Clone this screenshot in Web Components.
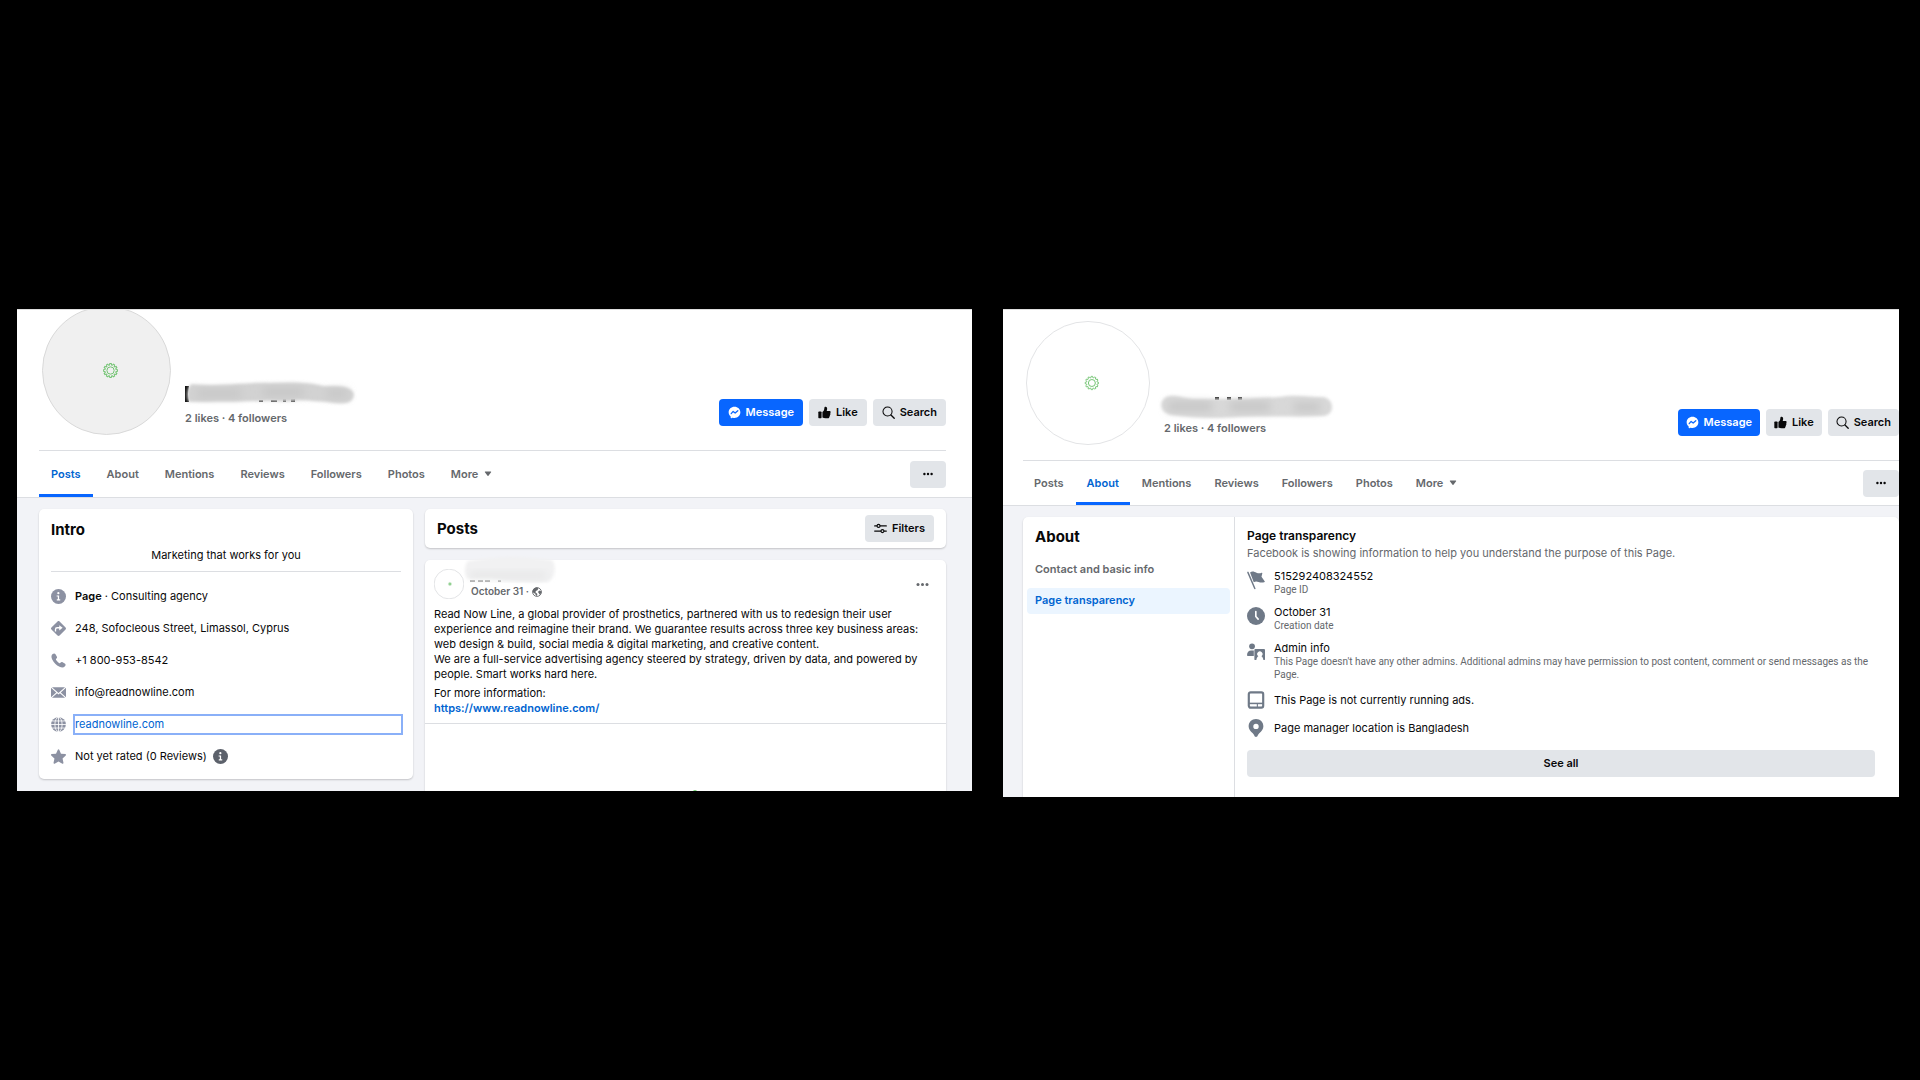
<!DOCTYPE html>
<html lang="en">
<head>
<meta charset="utf-8">
<meta name="viewport" content="width=device-width, initial-scale=1">
<title>Page profile</title>
<style>
  :root {
    --blue: #0866ff;
    --link: #0064d1;
    --text: #080809;
    --muted: #65686c;
    --line: #dcdee2;
    --wash: #f2f3f7;
    --button: #e2e5e9;
    --icon: #8c91a2;
    --card-shadow: 0 1px 2px rgba(0, 0, 0, 0.2);
    --small-font: Roboto, "Liberation Sans", sans-serif;
  }
  body {
    margin: 0;
    min-height: 100vh;
    background: #000;
    color: var(--text);
    font: 11px/15px Inter, "Liberation Sans", sans-serif;
  }
  main {
    display: grid;
    grid-template-columns: 955fr 896fr;
    gap: 31px;
    align-items: start;
    padding: 309px 21px 0 17px;
  }
  .posts-page {
    --pad-left: 22px;
    --pad-right: 26px;
    --avatar: 129px;
    --avatar-top: -4px;
    --name-gap: 6px;
    --button-pad: 9px;
    --tab-pad: 12px;
    --tab-gap: 2px;
    --tab-height: 46px;
  }
  .about-page {
    --pad-left: 20px;
    --pad-right: 0px;
    --avatar: 124px;
    --avatar-top: 11px;
    --name-gap: 2px;
    --button-pad: 8px;
    --tab-pad: 11px;
    --tab-gap: 1px;
    --tab-height: 44px;
  }
</style>
</head>
<body>
<main>
  <page-panel class="posts-page">
    <profile-header slot="header" avatar="grey" active="Posts"></profile-header>
    <posts-view></posts-view>
  </page-panel>
  <page-panel class="about-page">
    <profile-header slot="header" avatar="white" active="About"></profile-header>
    <about-view></about-view>
  </page-panel>
</main>

<script>
(() => {
  // Gear outline used by the avatars, about 14 units wide around 0,0
  const teeth = Array.from({ length: 12 }, (_, i) => {
    const at = (r, a) => {
      const t = (i * 30 + a) * Math.PI / 180;
      return `${(r * Math.cos(t)).toFixed(2)} ${(r * Math.sin(t)).toFixed(2)}`;
    };
    return `${at(5.5, -11)}L${at(6.9, -6)}L${at(6.9, 6)}L${at(5.5, 11)}`;
  }).join('L');
  const GEAR = `<g fill="none" stroke="#74c474" stroke-width="1"><path d="M${teeth}Z"/><circle r="3.6"/></g>`;

  const ICONS = {
    messenger: '<path fill="currentColor" d="M10 1C4.9 1 1 4.7 1 9.6c0 2.6 1.1 4.8 2.8 6.3.2.1.3.4.3.6v1.6c0 .6.6.9 1.1.7l1.8-.8c.2-.1.3-.1.5 0 .8.2 1.6.3 2.5.3 5.1 0 9-3.7 9-8.7S15.1 1 10 1z"/><path fill="none" stroke="#0866ff" stroke-width="1.9" stroke-linecap="round" stroke-linejoin="round" d="M4.9 11.8 7.9 8.3 11 10.8 15.1 7.2"/>',
    like: '<path fill="currentColor" d="M1.5 8.500h3c.6 0 1 .4 1 1v8.200c0 .6-.4 1-1 1h-3c-.6 0-1-.4-1-1V9.500c0-.6.4-1 1-1z"/><path fill="currentColor" d="M6.800 9.300c2-1.300 2.900-3.300 3-6.200 0-1.300.8-2.100 1.900-2.100 1.500 0 2.400 1.300 2.400 3.200 0 1.200-.3 2.300-.7 3.300h4.100c1.200 0 2 .8 2 1.800 0 .8-.4 1.300-.9 1.600.4.4.6.9.6 1.400 0 .8-.5 1.400-1.100 1.700.2.3.3.7.3 1 0 .8-.5 1.400-1.200 1.600.1.2.1.4.1.6 0 .9-.8 1.600-1.900 1.600h-3.700c-2 0-3.400-.3-4.900-1.200z"/>',
    search: '<circle cx="8.500" cy="8.500" r="7" fill="none" stroke="currentColor" stroke-width="1.600"/><path stroke="currentColor" stroke-width="2" stroke-linecap="round" d="m13.800 13.800 5 5"/>',
    dots: '<circle cx="4" cy="10" r="2" fill="currentColor"/><circle cx="10" cy="10" r="2" fill="currentColor"/><circle cx="16" cy="10" r="2" fill="currentColor"/>',
    filters: '<g fill="none" stroke="currentColor" stroke-width="1.700" stroke-linecap="round"><path d="M1 6h3.500M9.500 6H19M1 14h9.500M15.500 14H19"/><circle cx="7" cy="6" r="2.300"/><circle cx="13" cy="14" r="2.300"/></g>',
    caret: '<path fill="currentColor" d="M3 4h14c1 0 1.400 1 .8 1.700l-6.700 8.600c-.6.700-1.600.7-2.200 0L2.200 5.700C1.600 5 2 4 3 4z"/>',
    info: '<circle cx="10" cy="10" r="10" fill="currentColor"/><g fill="#fff"><circle cx="9.800" cy="5.600" r="1.500"/><path d="M7.500 8.500h3.300v5.200h1.500v1.500H7.700v-1.500h1.400V10H7.500z"/></g>',
    direction: '<path fill="currentColor" d="M8.700.6.6 8.700c-.8.8-.8 1.900 0 2.700l8.100 8c.8.8 1.900.8 2.700 0l8-8c.8-.8.8-1.900 0-2.700l-8-8.100C10.600-.2 9.500-.2 8.700.6z"/><path fill="none" stroke="#fff" stroke-width="1.800" d="M6 14v-2.600c0-1.500.8-2.400 2.300-2.400H12"/><path fill="#fff" d="m11 5.500 4.500 3.500-4.500 3.500z"/>',
    phone: '<path fill="currentColor" d="M2.200 1.400C3.700.1 5.200.3 6 1.700l1.700 2.800c.7 1.100.4 2-.6 2.900-.7.7-.8 1.200-.3 2 1 1.600 2.200 2.800 3.800 3.800.8.5 1.300.4 2-.3.9-1 1.800-1.300 2.900-.6l2.800 1.700c1.400.8 1.600 2.300.3 3.800-1.700 1.900-4.100 2.100-7.200.6C6.900 16.200 3.800 13.100 1.600 8.600.1 5.500.3 3.100 2.200 1.400z"/>',
    mail: '<path fill="currentColor" d="M0 3.800 7 10 0 16.200zM20 3.800 13 10l7 6.200zM1.300 3h17.400L10 10.700zM1.300 17l6.800-6.100 1.900 1.700 1.900-1.700 6.800 6.100z"/>',
    globe: '<circle cx="10" cy="10" r="9.800" fill="currentColor"/><g fill="none" stroke="#fff" stroke-width="1.100"><path d="M10 0v20M0 10h20M1.500 5.300h17M1.500 14.700h17"/><ellipse cx="10" cy="10" rx="4.800" ry="9.600"/></g>',
    star: '<path fill="currentColor" d="M9.100.9c.4-.9 1.500-.9 1.900 0l2.300 5.300 5.800.6c.9.100 1.200 1.200.6 1.800l-4.300 3.900 1.200 5.900c.2.900-.7 1.600-1.500 1.100L10 16.500l-5.100 3c-.8.500-1.700-.2-1.500-1.100l1.200-5.900L.3 8.600c-.6-.6-.3-1.700.6-1.800l5.800-.6z"/>',
    world: '<circle cx="10" cy="10" r="8.800" fill="none" stroke="currentColor" stroke-width="1.800"/><path fill="currentColor" d="M9.500 1c-5 .4-8.300 4-8.300 8.500l2.500 3 2.800.5.500 2.500 2 2.500c1.600-1.300 1.800-2.800 1.400-4.500L6.800 10.500l1-2.500 3-1.500L13 3zM14.500 7l-2.500 3 2 3 1.500 2.500 3-3.500L19 9z"/>',
    flag: '<path fill="none" stroke="currentColor" stroke-width="1.600" stroke-linecap="round" d="M1 1.500 8.700 19.500"/><path fill="currentColor" d="M3.400 1.600C6-.4 8.300 1 10.500 1.900c2 .8 3.700 1 5.700.1.600-.3 1 .2.800.8l-.9 3.600 3.500 5c.4.500.1 1-.5 1.100-2.600.6-4.400.3-6.300-.4-2-.7-3.500-.9-5.300.5z"/>',
    clock: '<circle cx="10" cy="10" r="10" fill="currentColor"/><path fill="none" stroke="#fff" stroke-width="1.800" stroke-linecap="round" stroke-linejoin="round" d="M9.800 5v5.500l2.600 3"/>',
    admin: '<g fill="currentColor"><circle cx="5.600" cy="3.700" r="3.200"/><path d="M0 13.500C0 10.300 1.800 8.200 4.600 8.200h3v6.200H1C.4 14.400 0 14 0 13.500z"/><path fill-rule="evenodd" d="M9.200 6.800h9.800c.6 0 1 .4 1 1V18c0 .6-.4 1-1 1h-.8c-.2-2.200-1-3.600-2.200-4.300a2.900 2.900 0 1 0-3.400 0c-1.200.7-2 2.100-2.200 4.300h-1.200c-.6 0-1-.4-1-1V7.800c0-.6.4-1 1-1z"/></g>',
    ads: '<rect x="2" y="1.500" width="16" height="17" rx="2" fill="none" stroke="currentColor" stroke-width="2.400"/><path fill="none" stroke="currentColor" stroke-width="1.700" d="M2 13.800h16"/><path fill="none" stroke="currentColor" stroke-width="1.200" d="M11.500 14v4"/>',
    pin: '<path fill="currentColor" fill-rule="evenodd" d="M10 0C5.200 0 1.800 3.500 1.800 8c0 3.400 1.900 5.400 4.600 7.700.6.500 1.200 1.300 1.700 2.700.4 1.100.9 1.600 1.900 1.600s1.500-.5 1.900-1.600c.5-1.400 1.100-2.200 1.700-2.700 2.700-2.300 4.600-4.300 4.600-7.700 0-4.500-3.400-8-8.200-8zm0 11.200a3 3 0 1 1 0-6 3 3 0 0 1 0 6z"/>'
  };

  const shadow = (el, html) => {
    el.attachShadow({ mode: 'open' }).innerHTML = html;
  };

  class UiIcon extends HTMLElement {
    connectedCallback() {
      if (this.shadowRoot) return;
      shadow(this, `
        <style>
          :host { display: inline-block; flex: none; width: var(--size, 15px); height: var(--size, 15px); }
          svg { display: block; width: 100%; height: 100%; overflow: visible; }
        </style>
        <svg viewBox="0 0 20 20" aria-hidden="true">${ICONS[this.getAttribute('name')] || ''}</svg>
      `);
    }
  }

  // variants: primary | icon | default grey
  class UiButton extends HTMLElement {
    connectedCallback() {
      if (this.shadowRoot) return;
      const label = this.getAttribute('label');
      shadow(this, `
        <style>
          :host { display: block; flex: none; }
          button {
            display: flex;
            align-items: center;
            justify-content: center;
            gap: 5px;
            width: 100%;
            height: 27px;
            padding: 0 var(--button-pad);
            border: 0;
            border-radius: 4px;
            background: var(--button);
            color: var(--text);
            font: inherit;
            font-weight: 600;
            cursor: pointer;
          }
          :host([variant="primary"]) button { background: var(--blue); color: #fff; }
          :host([variant="icon"]) button { padding: 0 12px; }
          ui-icon { --size: 13px; }
          :host([variant="icon"]) ui-icon { --size: 12px; }
        </style>
        <button type="button"${label ? ` aria-label="${label}"` : ''}>
          ${this.hasAttribute('icon') ? `<ui-icon name="${this.getAttribute('icon')}"></ui-icon>` : ''}<slot></slot>
        </button>
      `);
    }
  }

  class PageAvatar extends HTMLElement {
    connectedCallback() {
      if (this.shadowRoot) return;
      const grey = this.getAttribute('tone') === 'grey';
      shadow(this, `
        <style>
          :host { display: block; flex: none; width: var(--avatar); height: var(--avatar); }
          svg { display: block; width: 100%; height: 100%; }
          circle { vector-effect: non-scaling-stroke; }
        </style>
        <svg viewBox="-64 -64 128 128" role="img" aria-label="Page logo">
          <circle r="63.500" fill="${grey ? '#f0f0f0' : '#fff'}" stroke="${grey ? '#d9d9d9' : '#e3e4e6'}"/>
          <g transform="translate(4 0)">${GEAR}</g>
        </svg>
      `);
    }
  }

  // Brushed-over page name
  const SMUDGES = {
    grey: `
      <path fill="#111" d="M0 5h4l-1 8 1 8H0z"/>
      <path fill="#333" d="M74 19h4v2h-4zM86 19h6v2h-6zM98 18h3v3h-3zM106 18h4v3h-4z"/>
      <path filter="url(#soft)" fill="#d2d2d2" d="M7 3C40 6 60 1 84 2c22-1 42-1 55 3 12 0 28-1 30 8 0 10-10 10-20 9-16-2-26-2-36-3-14 3-24 0-34 1-28 1-46 1-74 1C1 21 1 5 7 3z"/>
      <path filter="url(#deep)" fill="#c6c6c6" d="M12 9h44v7H12zM78 7h40v8H78zM142 9h20v7h-20z"/>`,
    white: `
      <path fill="#222" d="M51 2h4v3h-4zM63 2h4v3h-4zM74 2h4v3h-4z"/>
      <path filter="url(#soft)" fill="#d8d8d8" d="M2 2C11-2 19 4 33 4c30 0 50 0 82-2 16-3 30 0 44 0 12 2 12 18 0 19-30 1-60 0-84 1-26 2-46 1-68-2-12-3-12-14-5-18z"/>
      <path filter="url(#deep)" fill="#c6c6c6" d="M4 7h44v9H4zM66 7h40v9H66zM130 8h26v8h-26z"/>`,
    post: `
      <path fill="#aaa" d="M2 23h5v2H2zM10 23h5v2h-5zM17 23h5v2h-5zM30 23h3v2h-3z"/>
      <path filter="url(#soft)" fill="#f1f1f2" d="M0 4C30-1 54-1 84 3c5 6 3 19-4 22-14 1-30 0-43-1-12-4-28-2-37-2-4-5-4-14 0-18z"/>
      <path filter="url(#deep)" fill="#e2e3e3" d="M2 16h76v5H2z"/>`
  };

  class NameSmudge extends HTMLElement {
    connectedCallback() {
      if (this.shadowRoot) return;
      shadow(this, `
        <style>
          :host { display: block; width: 170px; height: 24px; }
          svg { display: block; width: 170px; height: 24px; overflow: visible; }
        </style>
        <svg viewBox="0 0 170 24" role="img" aria-label="Hidden name">
          <defs>
            <filter id="soft" x="-10%" y="-30%" width="120%" height="160%"><feGaussianBlur stdDeviation="1.400"/></filter>
            <filter id="deep" x="-20%" y="-100%" width="140%" height="300%"><feGaussianBlur stdDeviation="4"/></filter>
          </defs>
          ${SMUDGES[this.getAttribute('kind')]}
        </svg>
      `);
    }
  }

  class PagePanel extends HTMLElement {
    constructor() {
      super();
      shadow(this, `
        <style>
          :host {
            display: block;
            overflow: hidden;
            min-width: 0;
            box-sizing: border-box;
            border-top: 1px solid #dedede;
            background: var(--wash);
          }
          .body { padding: 11px var(--pad-right) 0 var(--pad-left); }
        </style>
        <slot name="header"></slot>
        <div class="body"><slot></slot></div>
      `);
    }
  }

  class ProfileHeader extends HTMLElement {
    connectedCallback() {
      if (this.shadowRoot) return;
      const active = this.getAttribute('active');
      const tone = this.getAttribute('avatar');
      const tabs = ['Posts', 'About', 'Mentions', 'Reviews', 'Followers', 'Photos'];
      shadow(this, `
        <style>
          :host {
            display: block;
            padding: 0 var(--pad-right) 0 var(--pad-left);
            background: #fff;
            border-bottom: 1px solid var(--line);
          }
          .top {
            display: flex;
            align-items: flex-end;
            gap: 14px;
            padding: 0 0 15px 3px;
            border-bottom: 1px solid var(--line);
          }
          page-avatar { margin-top: var(--avatar-top); }
          .who { flex: 1; min-width: 0; padding-bottom: 9px; }
          .who p { margin: var(--name-gap) 0 0; color: var(--muted); font-weight: 600; }
          .actions { display: flex; gap: 6px; padding-bottom: 9px; }
          .bar { display: flex; align-items: center; justify-content: space-between; height: var(--tab-height); }
          nav { display: flex; gap: var(--tab-gap); height: 100%; }
          nav a {
            display: flex;
            align-items: center;
            gap: 6px;
            padding: 3px var(--tab-pad) 0;
            border-bottom: 3px solid transparent;
            color: var(--muted);
            font-weight: 600;
            text-decoration: none;
          }
          nav a[aria-current] { color: var(--link); border-color: var(--blue); }
          nav ui-icon { --size: 8px; }
        </style>
        <div class="top">
          <page-avatar tone="${tone}"></page-avatar>
          <div class="who">
            <name-smudge kind="${tone}"></name-smudge>
            <p>2 likes · 4 followers</p>
          </div>
          <div class="actions">
            <ui-button variant="primary" icon="messenger">Message</ui-button>
            <ui-button icon="like">Like</ui-button>
            <ui-button icon="search">Search</ui-button>
          </div>
        </div>
        <div class="bar">
          <nav>
            ${tabs.map(t => `<a href="#${t.toLowerCase()}"${t === active ? ' aria-current="page"' : ''}>${t}</a>`).join('')}
            <a href="#more">More <ui-icon name="caret"></ui-icon></a>
          </nav>
          <ui-button variant="icon" icon="dots" label="More options"></ui-button>
        </div>
      `);
    }
  }

  class UiCard extends HTMLElement {
    constructor() {
      super();
      shadow(this, `
        <style>
          :host {
            display: block;
            box-sizing: border-box;
            border-radius: 5px;
            background: #fff;
            box-shadow: var(--card-shadow);
          }
        </style>
        <slot></slot>
      `);
    }
  }

  class IntroRow extends HTMLElement {
    connectedCallback() {
      if (this.shadowRoot) return;
      shadow(this, `
        <style>
          :host { display: flex; align-items: center; gap: 9px; height: 20px; }
          ui-icon { color: var(--icon); }
          .value { flex: 1; display: flex; align-items: center; gap: 6px; }
        </style>
        <ui-icon name="${this.getAttribute('icon')}"></ui-icon>
        <div class="value"><slot></slot></div>
      `);
    }
  }

  class PostsView extends HTMLElement {
    constructor() {
      super();
      shadow(this, `
        <style>
          :host { display: grid; grid-template-columns: 374fr 521fr; gap: 12px; }
          h2 { margin: 0; font-size: 15px; line-height: 20px; font-weight: 700; }
          b { font-weight: 600; }
          p { margin: 0; }
          a { color: var(--link); text-decoration: none; }

          .intro { align-self: start; padding: 11px 12px 13px; margin-bottom: 12px; }
          .intro .tagline { padding: 8px 0 8px; border-bottom: 1px solid var(--line); text-align: center; }
          .rows { display: grid; gap: 12px; padding-top: 14px; }
          .rows a { flex: 1; padding: 1px 0; outline: 2px solid #8ab0f8; }
          .note { color: #5c616b; }

          .feed { display: flex; flex-direction: column; gap: 12px; min-width: 0; }
          .title { display: flex; align-items: center; justify-content: space-between; padding: 6px 12px; }
          .post { flex: 1; display: flex; flex-direction: column; border-radius: 5px 5px 0 0; }
          .post header { position: relative; display: flex; align-items: flex-end; gap: 7px; padding: 9px 16px 0 9px; }
          .post header page-avatar { --avatar: 30px; }
          .date { flex: 1; display: flex; align-items: center; gap: 3px; color: var(--muted); font-size: 10px; font-weight: 600; }
          .date ui-icon { --size: 10px; }
          .post name-smudge { position: absolute; left: 43px; top: -3px; }
          .post .menu { align-self: center; padding: 0; border: 0; background: none; color: var(--muted); line-height: 0; }
          .menu ui-icon { --size: 15px; }
          .text { display: grid; gap: 4px; padding: 8px 9px 7px; }
          .text a { font-weight: 600; }
          .media { flex: 1; display: flex; align-items: flex-end; justify-content: center; border-top: 1px solid var(--line); }
          .media svg { display: block; margin-left: 18px; }
        </style>
        <ui-card class="intro">
          <h2>Intro</h2>
          <p class="tagline">Marketing that works for you</p>
          <div class="rows">
            <intro-row icon="info"><span><b>Page</b> · Consulting agency</span></intro-row>
            <intro-row icon="direction">248, Sofocleous Street, Limassol, Cyprus</intro-row>
            <intro-row icon="phone">+1 800-953-8542</intro-row>
            <intro-row icon="mail">info@readnowline.com</intro-row>
            <intro-row icon="globe"><a href="#site">readnowline.com</a></intro-row>
            <intro-row icon="star">Not yet rated (0 Reviews)<ui-icon class="note" name="info"></ui-icon></intro-row>
          </div>
        </ui-card>
        <div class="feed">
          <ui-card class="title">
            <h2>Posts</h2>
            <ui-button icon="filters">Filters</ui-button>
          </ui-card>
          <ui-card class="post">
            <header>
              <page-avatar tone="white"></page-avatar>
              <span class="date">October 31 · <ui-icon name="world"></ui-icon></span>
              <button class="menu" type="button" aria-label="Post options"><ui-icon name="dots"></ui-icon></button>
              <name-smudge kind="post"></name-smudge>
            </header>
            <div class="text">
              <p>Read Now Line, a global provider of prosthetics, partnered with us to redesign their user experience and reimagine their brand. We guarantee results across three key business areas: web design &amp; build, social media &amp; digital marketing, and creative content.<br>We are a full-service advertising agency steered by strategy, driven by data, and powered by people. Smart works hard here.</p>
              <p>For more information:<br><a href="#site">https://www.readnowline.com/</a></p>
            </div>
            <div class="media">
              <svg width="6" height="1" viewBox="0 0 6 1" aria-hidden="true"><path fill="#7ed87e" d="M1 1 2 0h2l1 1z"/></svg>
            </div>
          </ui-card>
        </div>
      `);
    }
  }

  class FactRow extends HTMLElement {
    connectedCallback() {
      if (this.shadowRoot) return;
      const note = this.getAttribute('note');
      shadow(this, `
        <style>
          :host { display: flex; align-items: center; gap: 9px; min-height: 19px; }
          :host([note]) { align-items: flex-start; }
          ui-icon { --size: 18px; color: #6f7987; }
          :host([note]) ui-icon { margin-top: 2px; }
          p { margin: 0; line-height: 14px; }
          .note { color: var(--muted); font: 10px/13px var(--small-font); }
        </style>
        <ui-icon name="${this.getAttribute('icon')}"></ui-icon>
        <div>
          <p><slot></slot></p>
          ${note ? `<p class="note">${note}</p>` : ''}
        </div>
      `);
    }
  }

  class AboutView extends HTMLElement {
    constructor() {
      super();
      shadow(this, `
        <style>
          ui-card { display: grid; grid-template-columns: 212fr 664fr; border-radius: 5px 5px 0 0; }
          h2 { margin: 0; padding: 0 8px; font-size: 15px; line-height: 20px; font-weight: 700; }
          h3 { margin: 0; font-size: 12px; line-height: 15px; font-weight: 600; }
          .side { display: grid; gap: 5px; align-content: start; padding: 10px 4px 0; border-right: 1px solid var(--line); }
          .side h2 { margin-bottom: 5px; }
          .side a {
            padding: 5px 8px 6px;
            border-radius: 4px;
            color: var(--muted);
            font-weight: 600;
            text-decoration: none;
          }
          .side a[aria-current] { background: #ebf5ff; color: var(--link); }
          .content { padding: 11px 24px 20px 12px; }
          .lead { margin: 3px 0 8px; color: var(--muted); }
          .facts { display: grid; gap: 9px; padding-bottom: 13px; }
        </style>
        <ui-card>
          <nav class="side">
            <h2>About</h2>
            <a href="#contact">Contact and basic info</a>
            <a href="#transparency" aria-current="page">Page transparency</a>
          </nav>
          <section class="content">
            <h3>Page transparency</h3>
            <p class="lead">Facebook is showing information to help you understand the purpose of this Page.</p>
            <div class="facts">
              <fact-row icon="flag" note="Page ID">515292408324552</fact-row>
              <fact-row icon="clock" note="Creation date">October 31</fact-row>
              <fact-row icon="admin" note="This Page doesn't have any other admins. Additional admins may have permission to post content, comment or send messages as the Page.">Admin info</fact-row>
              <fact-row icon="ads">This Page is not currently running ads.</fact-row>
              <fact-row icon="pin">Page manager location is Bangladesh</fact-row>
            </div>
            <ui-button>See all</ui-button>
          </section>
        </ui-card>
      `);
    }
  }

  customElements.define('ui-icon', UiIcon);
  customElements.define('ui-button', UiButton);
  customElements.define('ui-card', UiCard);
  customElements.define('page-avatar', PageAvatar);
  customElements.define('name-smudge', NameSmudge);
  customElements.define('intro-row', IntroRow);
  customElements.define('fact-row', FactRow);
  customElements.define('posts-view', PostsView);
  customElements.define('about-view', AboutView);
  customElements.define('profile-header', ProfileHeader);
  customElements.define('page-panel', PagePanel);
})();
</script>
</body>
</html>
